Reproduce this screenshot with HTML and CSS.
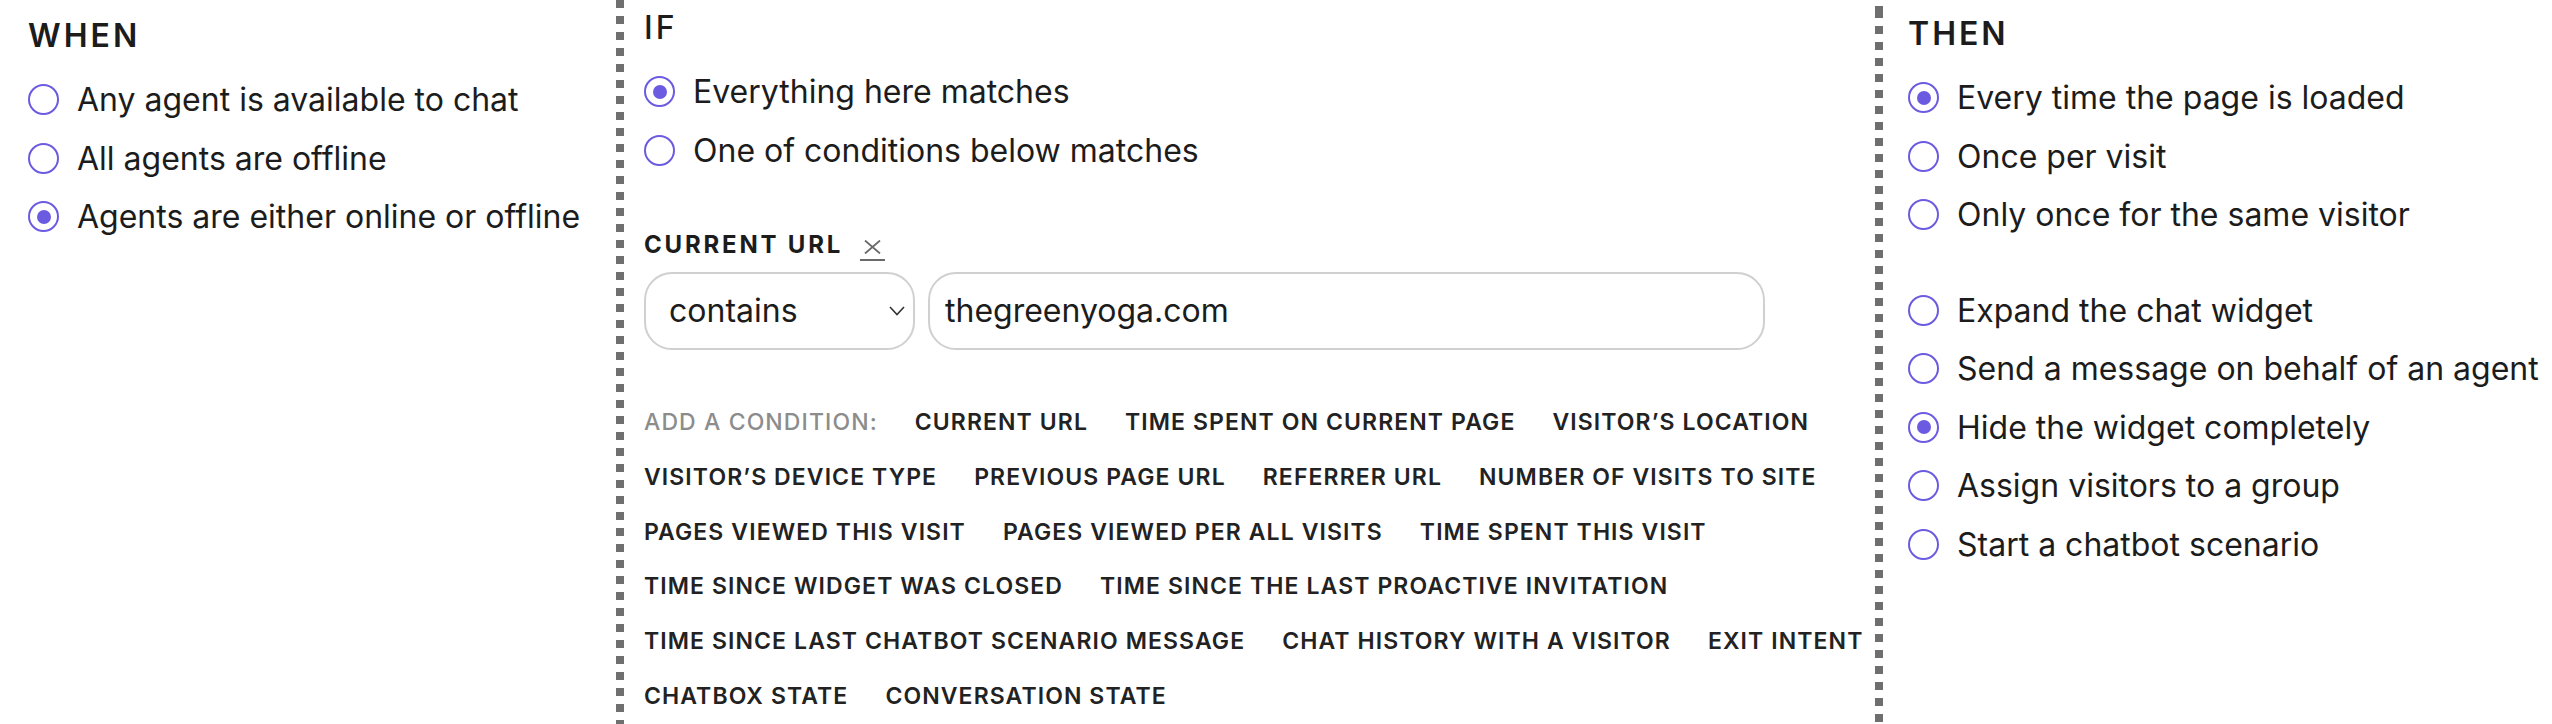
FILE: index.html
```html
<!DOCTYPE html>
<html lang="en">
<head>
<meta charset="utf-8">
<title>Trigger rules</title>
<link rel="stylesheet" href="styles.css">
</head>
<body>
<div class="rule">
  <section class="col col-when">
    <h2 class="heading">WHEN</h2>
    <ul class="options">
      <li class="option"><span class="radio"></span><span>Any agent is available to chat</span></li>
      <li class="option"><span class="radio"></span><span>All agents are offline</span></li>
      <li class="option"><span class="radio checked"></span><span>Agents are either online or offline</span></li>
    </ul>
  </section>
  <div class="divider"></div>
  <section class="col col-if">
    <h2 class="heading heading-if">IF</h2>
    <ul class="options">
      <li class="option"><span class="radio checked"></span><span>Everything here matches</span></li>
      <li class="option"><span class="radio"></span><span>One of conditions below matches</span></li>
    </ul>
    <div class="condition">
      <div class="condition-head">
        <span class="condition-title">CURRENT URL</span>
        <a class="remove" href="#" aria-label="Remove condition"><svg width="17" height="14" viewBox="0 0 17 14"><path d="M1 0.5 L16 13.5 M16 0.5 L1 13.5" stroke="#6a6a6a" stroke-width="1.8" fill="none"/></svg></a>
      </div>
      <div class="condition-fields">
        <div class="select">
          <span>contains</span>
          <svg class="chevron" width="16" height="10" viewBox="0 0 16 10"><path d="M1 1 L8 8.5 L15 1" stroke="#333" stroke-width="1.6" fill="none"/></svg>
        </div>
        <div class="input">thegreenyoga.com</div>
      </div>
    </div>
    <div class="add">
      <span class="add-label">ADD A CONDITION:</span>
      <span class="chip">CURRENT URL</span>
      <span class="chip">TIME SPENT ON CURRENT PAGE</span>
      <span class="chip">VISITOR’S LOCATION</span>
      <span class="chip">VISITOR’S DEVICE TYPE</span>
      <span class="chip">PREVIOUS PAGE URL</span>
      <span class="chip">REFERRER URL</span>
      <span class="chip">NUMBER OF VISITS TO SITE</span>
      <span class="chip">PAGES VIEWED THIS VISIT</span>
      <span class="chip">PAGES VIEWED PER ALL VISITS</span>
      <span class="chip">TIME SPENT THIS VISIT</span>
      <span class="chip">TIME SINCE WIDGET WAS CLOSED</span>
      <span class="chip">TIME SINCE THE LAST PROACTIVE INVITATION</span>
      <span class="chip">TIME SINCE LAST CHATBOT SCENARIO MESSAGE</span>
      <span class="chip">CHAT HISTORY WITH A VISITOR</span>
      <span class="chip">EXIT INTENT</span>
      <span class="chip">CHATBOX STATE</span>
      <span class="chip">CONVERSATION STATE</span>
    </div>
  </section>
  <div class="divider divider-2"></div>
  <section class="col col-then">
    <h2 class="heading">THEN</h2>
    <ul class="options">
      <li class="option"><span class="radio checked"></span><span>Every time the page is loaded</span></li>
      <li class="option"><span class="radio"></span><span>Once per visit</span></li>
      <li class="option"><span class="radio"></span><span>Only once for the same visitor</span></li>
    </ul>
    <ul class="options options-actions">
      <li class="option"><span class="radio"></span><span>Expand the chat widget</span></li>
      <li class="option"><span class="radio"></span><span>Send a message on behalf of an agent</span></li>
      <li class="option"><span class="radio checked"></span><span>Hide the widget completely</span></li>
      <li class="option"><span class="radio"></span><span>Assign visitors to a group</span></li>
      <li class="option"><span class="radio"></span><span>Start a chatbot scenario</span></li>
    </ul>
  </section>
</div>
</body>
</html>
```
FILE: styles.css
```css
html, body {
  margin: 0;
  padding: 0;
  background: #fff;
}
body {
  font-family: Inter, "Noto Sans", sans-serif;
  color: #1c1c1c;
  height: 724px;
  overflow: hidden;
}
.rule {
  display: flex;
  height: 724px;
}
.col {
  box-sizing: border-box;
}
.col-when {
  width: 616px;
  padding: 16px 0 0 28px;
}
.col-if {
  width: 1251px;
  padding: 8px 6px 0 20px;
}
.col-then {
  flex: 1;
  padding: 14px 0 0 25px;
  white-space: nowrap;
}
.divider {
  width: 8px;
  flex: none;
  background-image: repeating-linear-gradient(to bottom, #6f6f6f 0 8px, transparent 8px 16px);
}
.divider-2 {
  background-position: 0 10px;
}
.heading {
  margin: 0;
  font-size: 32px;
  line-height: 40px;
  font-weight: 600;
  letter-spacing: 3px;
}
.heading-if {
  font-weight: 500;
}
.options {
  list-style: none;
  margin: 14.5px 0 0;
  padding: 0;
}
.options-actions {
  margin-top: 37px;
}
.option {
  display: flex;
  align-items: center;
  height: 58.5px;
  font-size: 32px;
  white-space: nowrap;
}
.radio {
  box-sizing: border-box;
  width: 31px;
  height: 31px;
  border: 2px solid #6b5be0;
  border-radius: 50%;
  margin-right: 18px;
  flex: none;
  display: flex;
  align-items: center;
  justify-content: center;
}
.radio.checked::after {
  content: "";
  width: 14px;
  height: 14px;
  border-radius: 50%;
  background: #6b5be0;
}
.condition {
  margin-top: 50px;
}
.condition-head {
  display: flex;
  align-items: center;
  height: 30px;
}
.condition-title {
  font-size: 24px;
  font-weight: 700;
  letter-spacing: 2.8px;
}
.remove {
  margin-left: 17px;
  display: flex;
  flex-direction: column;
  align-items: center;
  border-bottom: 2px solid #6a6a6a;
  padding: 0 4px 5px;
  margin-top: 12px;
}
.remove svg {
  display: block;
}
.condition-fields {
  display: flex;
  gap: 13px;
  margin-top: 12px;
}
.select, .input {
  box-sizing: border-box;
  height: 78px;
  border: 2px solid #d0d0d0;
  border-radius: 28px;
  display: flex;
  align-items: center;
  font-size: 32px;
}
.select {
  width: 271px;
  padding: 0 8px 0 23px;
  justify-content: space-between;
}
.input {
  width: 837px;
  padding-left: 15px;
}
.add {
  display: flex;
  flex-wrap: wrap;
  column-gap: 37px;
  margin-top: 45.5px;
  font-size: 23px;
  line-height: 54.8px;
  font-weight: 600;
  letter-spacing: 1.1px;
  color: #222;
}
.add-label {
  color: #8c8c8c;
  font-weight: 500;
}
```
